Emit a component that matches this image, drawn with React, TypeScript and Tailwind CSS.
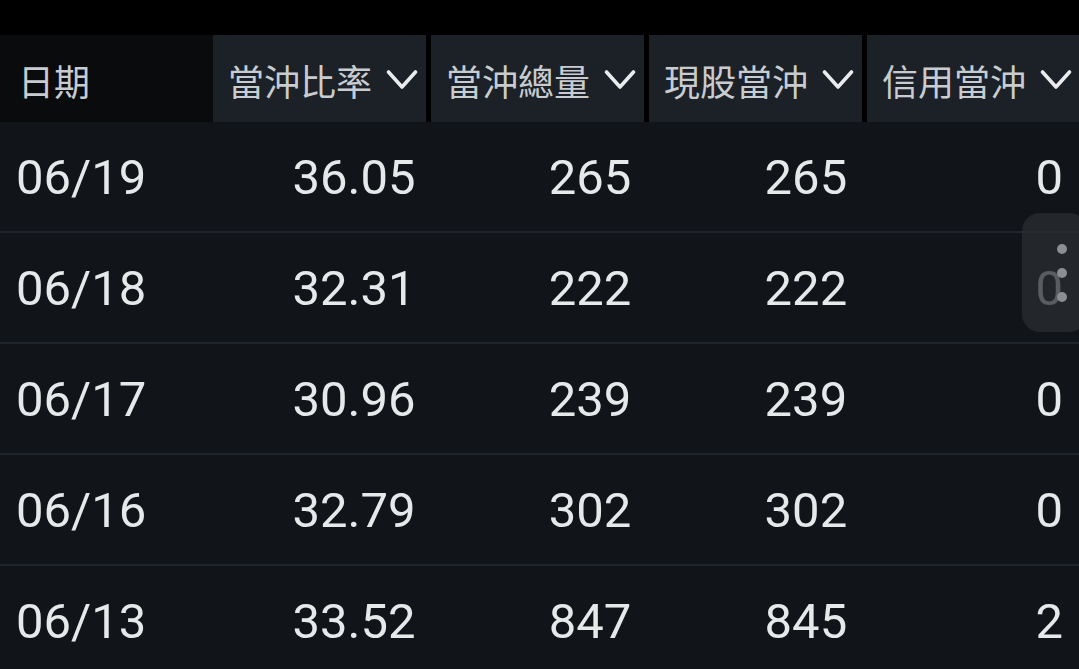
import React from "react";

const rows = [
  ["06/19", "36.05", "265", "265", "0"],
  ["06/18", "32.31", "222", "222", "0"],
  ["06/17", "30.96", "239", "239", "0"],
  ["06/16", "32.79", "302", "302", "0"],
  ["06/13", "33.52", "847", "845", "2"],
];

const headers = ["當沖比率", "當沖總量", "現股當沖", "信用當沖"];

function Chevron() {
  return (
    <svg width="32" height="22" viewBox="0 0 32 22" className="shrink-0">
      <polyline points="2.5,3 16,18 29.5,3" fill="none" stroke="#e9ebed" strokeWidth="3.6" strokeLinecap="round" strokeLinejoin="round" />
    </svg>
  );
}

export default function App() {
  return (
    <div className="relative w-[1079px] h-[669px] overflow-hidden bg-[#111418]" style={{ fontFamily: "Roboto, 'Noto Sans CJK TC', sans-serif" }}>
      <div className="h-[35px] bg-black" />
      <div className="flex h-[87px] bg-black">
        <div className="w-[213px] shrink-0 bg-[#0a0b0d] flex items-center pl-[18px] pt-[2px] text-[36px] text-[#c8ccd0]" style={{ fontFamily: "'Noto Sans CJK TC', sans-serif" }}>
          日期
        </div>
        {headers.map((h, i) => (
          <div
            key={h}
            className={`w-[213px] shrink-0 bg-[#1b2126] flex items-center pl-[15px] pr-[8px] pt-[2px] text-[36px] text-[#c8ccd0] ${i > 0 ? "ml-[5px]" : ""}`}
            style={{ fontFamily: "'Noto Sans CJK TC', sans-serif" }}
          >
            <span className="leading-none">{h}</span>
            <span className="ml-auto flex items-center">
              <Chevron />
            </span>
          </div>
        ))}
      </div>
      {rows.map((r) => (
        <div key={r[0]} className="grid grid-cols-5 h-[111px] border-b-2 border-[#1f252a] items-center text-[49px] text-[#e6e8ea] pt-[2px]">
          <div className="pl-[16px]">{r[0]}</div>
          {r.slice(1).map((v, j) => (
            <div key={j} className="text-right pr-[16px]">
              {v}
            </div>
          ))}
        </div>
      ))}
      <div className="absolute right-[-8px] top-[213px] w-[65px] h-[119px] rounded-[18px] bg-[#2a2e33]/75 flex flex-col items-start pl-[35px] justify-center gap-[14px]">
        <div className="w-[10px] h-[10px] rounded-full bg-[#8b8e92]" />
        <div className="w-[10px] h-[10px] rounded-full bg-[#8b8e92]" />
        <div className="w-[10px] h-[10px] rounded-full bg-[#8b8e92]" />
      </div>
    </div>
  );
}
